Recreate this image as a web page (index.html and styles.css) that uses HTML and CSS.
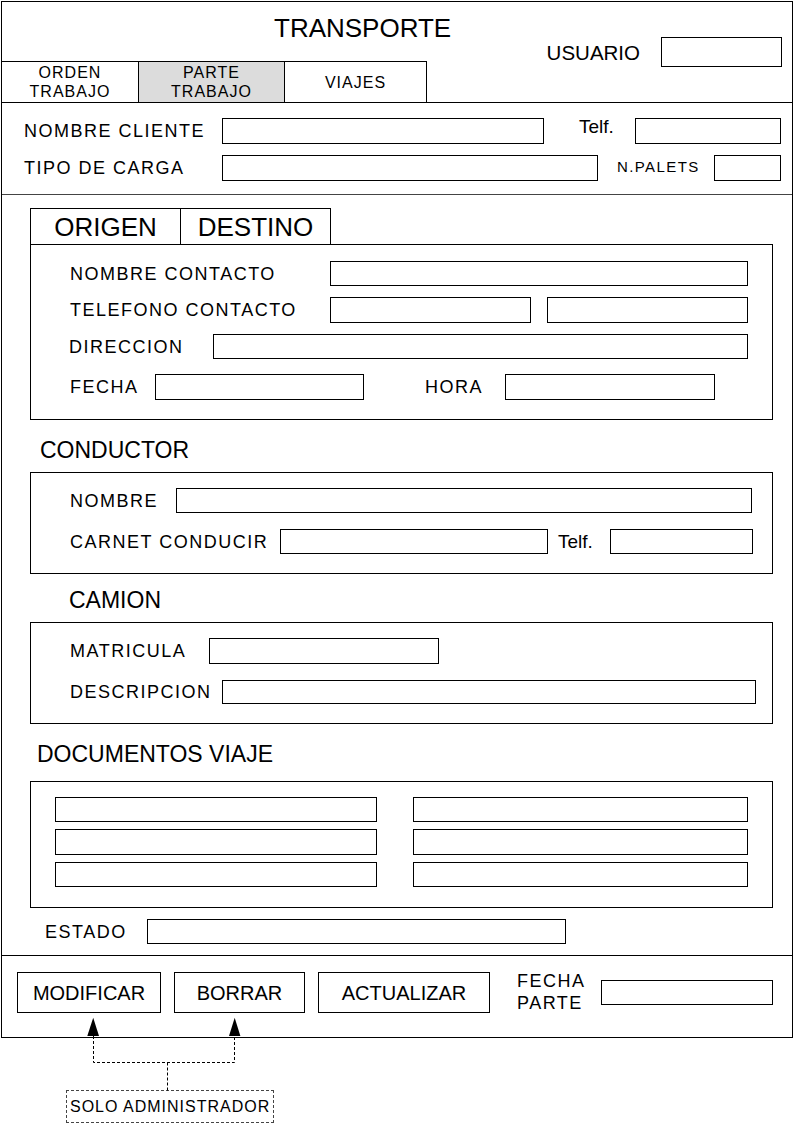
FILE: index.html
```html
<!DOCTYPE html>
<html lang="es">
<head>
<meta charset="utf-8">
<title>Transporte - Parte trabajo</title>
<link rel="stylesheet" href="styles.css">
</head>
<body>
<div class="page">
  <div class="frame">
    <header class="hdr">
      <h1 class="title">TRANSPORTE</h1>
      <div class="user">
        <span class="user-label">USUARIO</span>
        <span class="box user-input"></span>
      </div>
      <nav class="tabs">
        <div class="tab tab-orden">ORDEN<br>TRABAJO</div>
        <div class="tab tab-parte is-active">PARTE<br>TRABAJO</div>
        <div class="tab tab-viajes">VIAJES</div>
      </nav>
    </header>

    <section class="client">
      <div class="row row-h26">
        <span class="lbl lbl-client">NOMBRE CLIENTE</span>
        <span class="box h26 in-cliente"></span>
        <span class="lbl-telf lbl-telf-client">Telf.</span>
        <span class="box h26 in-telf-client"></span>
      </div>
      <div class="row row-h26 row-gap11">
        <span class="lbl lbl-client">TIPO DE CARGA</span>
        <span class="box h26 in-carga"></span>
        <span class="lbl-palets">N.PALETS</span>
        <span class="box h26 in-palets"></span>
      </div>
    </section>

    <section class="main">
      <div class="loc-tabs">
        <div class="loc-tab">ORIGEN</div>
        <div class="loc-tab">DESTINO</div>
      </div>
      <div class="panel panel-loc">
        <div class="row">
          <span class="lbl lbl-contact">NOMBRE CONTACTO</span>
          <span class="box in-contact-name"></span>
        </div>
        <div class="row mt11">
          <span class="lbl lbl-contact">TELEFONO CONTACTO</span>
          <span class="box h26 in-contact-tel"></span>
          <span class="box h26 in-contact-tel2"></span>
        </div>
        <div class="row mt11">
          <span class="lbl lbl-dir">DIRECCION</span>
          <span class="box in-dir"></span>
        </div>
        <div class="row mt15">
          <span class="lbl lbl-fecha">FECHA</span>
          <span class="box h26 in-fecha"></span>
          <span class="lbl lbl-hora">HORA</span>
          <span class="box h26 in-hora"></span>
        </div>
      </div>

      <h2 class="sec sec-conductor">CONDUCTOR</h2>
      <div class="panel panel-cond">
        <div class="row">
          <span class="lbl lbl-nombre">NOMBRE</span>
          <span class="box in-nombre"></span>
        </div>
        <div class="row mt16">
          <span class="lbl lbl-carnet">CARNET CONDUCIR</span>
          <span class="box in-carnet"></span>
          <span class="lbl-telf lbl-telf-cond">Telf.</span>
          <span class="box in-telf-cond"></span>
        </div>
      </div>

      <h2 class="sec sec-camion">CAMION</h2>
      <div class="panel panel-cam">
        <div class="row">
          <span class="lbl lbl-matricula">MATRICULA</span>
          <span class="box h26 in-matricula"></span>
        </div>
        <div class="row mt16">
          <span class="lbl lbl-desc">DESCRIPCION</span>
          <span class="box h24 in-desc"></span>
        </div>
      </div>

      <h2 class="sec sec-docs">DOCUMENTOS VIAJE</h2>
      <div class="panel panel-docs">
        <div class="docs-grid">
          <span class="box doc"></span>
          <span class="box doc"></span>
          <span class="box doc"></span>
          <span class="box doc"></span>
          <span class="box doc"></span>
          <span class="box doc"></span>
        </div>
      </div>

      <div class="row estado">
        <span class="lbl lbl-estado">ESTADO</span>
        <span class="box in-estado"></span>
      </div>
    </section>

    <footer class="actions">
      <div class="btn btn-mod">MODIFICAR</div>
      <div class="btn btn-del">BORRAR</div>
      <div class="btn btn-upd">ACTUALIZAR</div>
      <div class="lbl lbl-fparte">FECHA<br>PARTE</div>
      <span class="box in-fparte"></span>
    </footer>
  </div>

  <svg class="connectors" width="300" height="82" viewBox="0 0 300 82" aria-hidden="true">
    <polygon points="93.2,6.7 87.3,25 99,25" fill="#000"/>
    <polygon points="234.7,6.7 229,25 240.4,25" fill="#000"/>
    <g fill="none" stroke="#000" stroke-width="1" stroke-dasharray="3 2">
      <path d="M93.5 25 V51.5 H234.5 V25"/>
      <path d="M167.5 51.5 V80"/>
    </g>
  </svg>
  <div class="admin-note">SOLO ADMINISTRADOR</div>
</div>
</body>
</html>
```

FILE: styles.css
```css
* { box-sizing: border-box; }

html, body {
  margin: 0;
  padding: 0;
  background: #fff;
}

body {
  font-family: "Liberation Sans", Arial, sans-serif;
  color: #000;
}

.page {
  position: relative;
  width: 794px;
  height: 1123px;
}

.frame {
  margin: 1px 0 0 1px;
  width: 792px;
  border: 1px solid #000;
}

/* ---------- generic ---------- */
.box {
  display: block;
  flex: none;
  height: 25px;
  border: 1px solid #000;
  background: #fff;
}
.box.h26 { height: 26px; }
.box.h24 { height: 24px; }

.row {
  display: flex;
  align-items: center;
}
.row-h26 { height: 26px; }
.row-gap11 { margin-top: 11px; }
.mt11 { margin-top: 11px; }
.mt15 { margin-top: 15px; }
.mt16 { margin-top: 16px; }

.lbl {
  flex: none;
  font-size: 18px;
  line-height: 1;
  letter-spacing: 1.5px;
  white-space: nowrap;
}

.lbl-telf {
  flex: none;
  font-size: 19px;
  line-height: 1;
}

/* ---------- header ---------- */
.hdr {
  display: grid;
  grid-template-columns: 425px 1fr;
  grid-template-rows: 59px 41px;
  border-bottom: 1px solid #000;
}

.title {
  grid-column: 1 / 3;
  grid-row: 1;
  align-self: start;
  margin: 13px 0 0 272px;
  font-size: 26px;
  font-weight: normal;
  line-height: 1;
}

.user {
  grid-column: 2;
  grid-row: 1 / 3;
  align-self: start;
  justify-self: end;
  margin: 35px 10px 0 0;
  display: flex;
  align-items: center;
}

.user-label {
  font-size: 20.5px;
  line-height: 1;
  margin-right: 21px;
  margin-top: 2px;
}

.box.user-input {
  width: 121px;
  height: 30px;
}

.tabs {
  grid-column: 1;
  grid-row: 2;
  display: flex;
  border-top: 1px solid #000;
}

.tab {
  display: flex;
  align-items: center;
  justify-content: center;
  text-align: center;
  border-right: 1px solid #000;
  font-size: 16px;
  line-height: 19px;
  letter-spacing: 1px;
}

.tab-orden { width: 137px; }
.tab-parte { width: 146px; }
.tab-viajes { width: 142px; }
.tab.is-active { background: #dcdcdc; }

/* ---------- client ---------- */
.client {
  padding: 15px 0 13px 22px;
  border-bottom: 1px solid #444;
}

.lbl-client { width: 198px; }
.in-cliente { width: 322px; }
.lbl-telf-client {
  width: 56px;
  margin-left: 35px;
  align-self: flex-start;
  margin-top: -1px;
}
.in-telf-client { width: 146px; }
.in-carga { width: 376px; }
.lbl-palets {
  flex: none;
  width: 97px;
  margin-left: 19px;
  margin-bottom: 4px;
  font-size: 15px;
  line-height: 1;
  letter-spacing: 1.4px;
}
.in-palets { width: 67px; }

/* ---------- main ---------- */
.main {
  display: flex;
  flex-direction: column;
  align-items: flex-start;
  padding: 13px 0 11px 28px;
  border-bottom: 1px solid #000;
}

.loc-tabs {
  display: flex;
  height: 36px;
  border-top: 1px solid #000;
  border-left: 1px solid #000;
}

.loc-tab {
  width: 150px;
  display: flex;
  align-items: center;
  justify-content: center;
  border-right: 1px solid #000;
  font-size: 26px;
  line-height: 1;
}

.panel {
  width: 743px;
  border: 1px solid #000;
}

.panel-loc { padding: 16px 0 19px 39px; }
.lbl-contact { width: 260px; }
.in-contact-name { width: 418px; }
.in-contact-tel { width: 201px; }
.in-contact-tel2 { width: 201px; margin-left: 16px; }
.lbl-dir { width: 143px; margin-left: -1px; }
.in-dir { width: 535px; margin-left: 1px; }
.lbl-fecha { width: 85px; }
.in-fecha { width: 209px; }
.lbl-hora { width: 80px; margin-left: 61px; }
.in-hora { width: 210px; }

.sec {
  margin: 0;
  font-size: 23px;
  font-weight: normal;
  line-height: 1;
  height: 23px;
}
.sec-conductor { margin: 19px 0 10px 10px; }
.sec-camion { margin: 15px 0 10px 39px; }
.sec-docs { margin: 19px 0 15px 7px; }

.panel-cond { padding: 15px 0 19px 39px; }
.lbl-nombre { width: 106px; }
.in-nombre { width: 576px; }
.lbl-carnet { width: 210px; }
.in-carnet { width: 268px; }
.lbl-telf-cond { width: 52px; margin-left: 10px; }
.in-telf-cond { width: 143px; }

.panel-cam { padding: 15px 0 19px 39px; }
.lbl-matricula { width: 139px; }
.in-matricula { width: 230px; }
.lbl-desc { width: 152px; }
.in-desc { width: 534px; }

.panel-docs { padding: 15px 0 20px 24px; }
.docs-grid {
  display: grid;
  grid-template-columns: 322px 335px;
  grid-template-rows: 25px 26px 25px;
  column-gap: 36px;
  row-gap: 7px;
}
.box.doc { height: auto; }

.estado { margin: 11px 0 0 15px; }
.lbl-estado { width: 102px; }
.in-estado { width: 419px; }

/* ---------- footer ---------- */
.actions {
  display: flex;
  align-items: flex-start;
  height: 81px;
  padding: 16px 0 0 15px;
}

.btn {
  flex: none;
  height: 41px;
  display: flex;
  align-items: center;
  justify-content: center;
  border: 1px solid #000;
  font-size: 20px;
  line-height: 1;
}
.btn-mod { width: 144px; }
.btn-del { width: 131px; margin-left: 13px; }
.btn-upd { width: 172px; margin-left: 13px; }

.lbl-fparte {
  width: 84px;
  margin-left: 27px;
  margin-top: -2px;
  line-height: 22px;
}
.in-fparte { width: 172px; margin-top: 8px; }

/* ---------- annotation ---------- */
.connectors {
  position: absolute;
  left: 0;
  top: 1010px;
}

.admin-note {
  margin: 52px 0 0 66px;
  width: 208px;
  height: 33px;
  padding-left: 3px;
  display: flex;
  align-items: center;
  border: 1px dashed #444;
  font-size: 16px;
  line-height: 1;
  letter-spacing: 1px;
  white-space: nowrap;
}
```
